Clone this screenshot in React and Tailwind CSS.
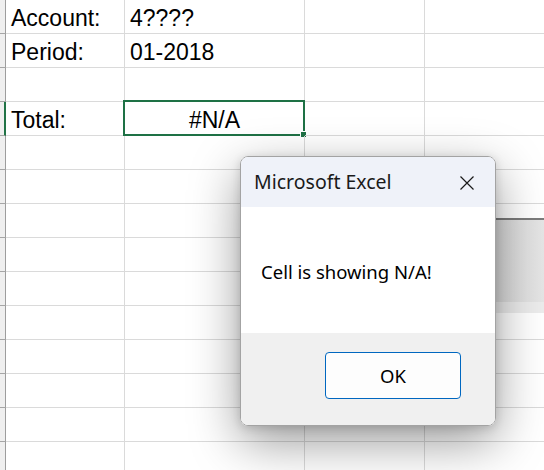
import React from "react";

const ROWS = 14;

function Cell({ w, children, className = "", last = false }) {
  return (
    <div
      className={`relative h-[34px] shrink-0 border-b border-[#dadada] ${last ? "grow" : "border-r"} ${className}`}
      style={w ? { width: w } : undefined}
    >
      {children}
    </div>
  );
}

export default function App() {
  const data = {
    0: ["Account:", "4????"],
    1: ["Period:", "01-2018"],
    3: ["Total:", "#N/A"],
  };
  return (
    <div
      className="relative h-[470px] w-[544px] overflow-hidden bg-white text-black"
      style={{ fontFamily: '"Liberation Sans", Arial, sans-serif' }}
    >
      {/* grid */}
      <div className="flex flex-col">
        {Array.from({ length: ROWS }).map((_, r) => (
          <div key={r} className="flex">
            <div
              className={`h-[34px] w-[6px] shrink-0 border-b border-r border-b-[#a6a6a6] bg-[#efefef] ${r === 3 ? "border-r-[#217346] border-r-2" : "border-r-[#9d9d9d]"}`}
            />
            <Cell w={119}>
              {data[r] && (
                <span className="absolute left-[5px] top-[3px] text-[23px] leading-[30px]">{data[r][0]}</span>
              )}
            </Cell>
            <Cell w={180}>
              {data[r] && r !== 3 && (
                <span className="absolute left-[5px] top-[3px] text-[23px] leading-[30px]">{data[r][1]}</span>
              )}
              {r === 3 && (
                <>
                  <span className="absolute inset-x-0 top-[3px] text-center text-[23px] leading-[30px]">#N/A</span>
                  <div className="absolute -left-[2px] -top-[2px] -right-[1px] -bottom-[1px] border-2 border-[#1e7145]" />
                  <div className="absolute -right-[3px] -bottom-[3px] h-[7px] w-[7px] border border-white bg-[#1e7145]" />
                </>
              )}
            </Cell>
            <Cell w={120} />
            <Cell last />
          </div>
        ))}
      </div>

      {/* window behind on the right */}
      <div className="absolute left-[470px] top-[218px] h-[84px] w-[80px] border-t-2 border-[#7b7b7b] bg-gradient-to-r from-[#d6d6d6] to-[#e6e6e6]" />
      <div className="absolute left-[470px] top-[302px] h-[11px] w-[80px] bg-[#ececec]" />

      {/* dialog */}
      <div
        className="absolute left-[240px] top-[156px] flex h-[270px] w-[256px] flex-col overflow-hidden rounded-[8px] border border-[#a3a3a3] shadow-[0_16px_50px_rgba(0,0,0,0.4),0_2px_10px_rgba(0,0,0,0.15)]"
        style={{ fontFamily: '"Noto Sans", "Open Sans", sans-serif' }}
      >
        <div className="flex h-[50px] shrink-0 items-center justify-between bg-[#eff2f9] pl-[13px] pr-[20px]">
          <span className="text-[19.5px] text-[#1a1a1a]">Microsoft Excel</span>
          <svg width="16" height="16" viewBox="0 0 16 16" className="mt-[1px]">
            <path d="M1.5 1.5 L14.5 14.5 M14.5 1.5 L1.5 14.5" stroke="#1a1a1a" strokeWidth="1.2" fill="none" />
          </svg>
        </div>
        <div className="flex h-[126px] shrink-0 items-center bg-white pl-[20px]">
          <span className="mt-[3px] text-[18.5px] text-black">Cell is showing N/A!</span>
        </div>
        <div className="flex grow items-start justify-end bg-[#f0f0f0] pr-[34px] pt-[19px]">
          <button className="flex h-[47px] w-[136px] items-center justify-center rounded-[4px] border border-[#0067c0] bg-[#fdfdfd] text-[18.5px] text-black">
            OK
          </button>
        </div>
      </div>
    </div>
  );
}
